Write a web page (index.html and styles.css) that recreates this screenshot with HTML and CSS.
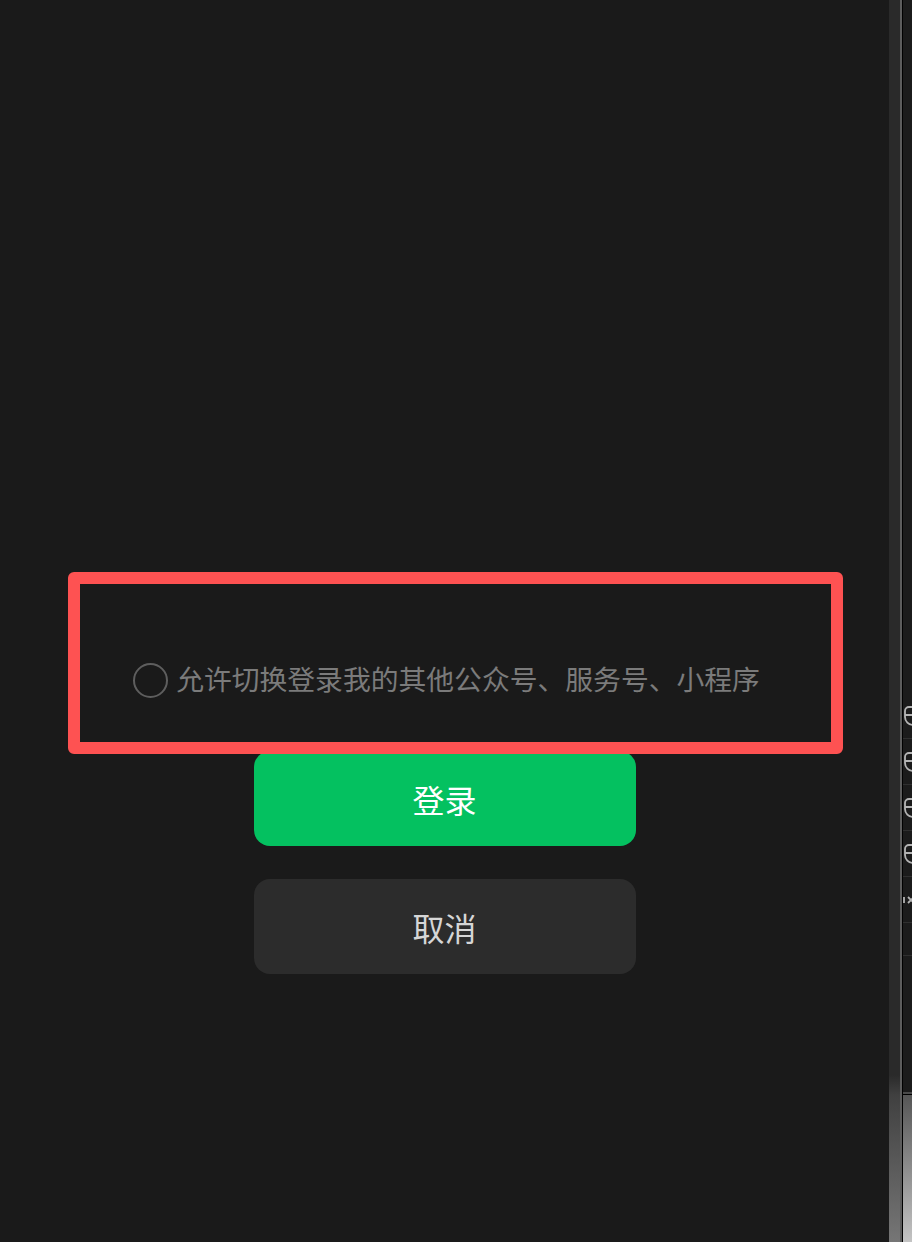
FILE: index.html
```html
<!DOCTYPE html>
<html lang="zh-CN">
<head>
<meta charset="utf-8">
<title>登录</title>
<link rel="stylesheet" href="styles.css">
</head>
<body>
<div class="window">
  <main class="main">
    <label class="allow-row">
      <span class="radio"></span>
      <span class="allow-text">允许切换登录我的其他公众号、服务号、小程序</span>
    </label>
    <button class="btn btn-login">登录</button>
    <button class="btn btn-cancel">取消</button>
    <div class="highlight"></div>
  </main>
  <div class="scroll-strip"></div>
  <div class="edge-line"></div>
  <aside class="side">
    <div class="side-list">
      <div class="side-item">
        <svg class="side-icon" viewBox="0 0 22 22"><path d="M21 2H6a4 4 0 0 0-4 4v6a8 8 0 0 0 8 8h11M2 10h19" fill="none" stroke="currentColor" stroke-width="1.8"/></svg>
      </div>
      <div class="side-item">
        <svg class="side-icon" viewBox="0 0 22 22"><path d="M21 2H6a4 4 0 0 0-4 4v6a8 8 0 0 0 8 8h11M2 10h19" fill="none" stroke="currentColor" stroke-width="1.8"/></svg>
      </div>
      <div class="side-item">
        <svg class="side-icon" viewBox="0 0 22 22"><path d="M21 2H6a4 4 0 0 0-4 4v6a8 8 0 0 0 8 8h11M2 10h19" fill="none" stroke="currentColor" stroke-width="1.8"/></svg>
      </div>
      <div class="side-item">
        <svg class="side-icon" viewBox="0 0 22 22"><path d="M21 2H6a4 4 0 0 0-4 4v6a8 8 0 0 0 8 8h11M2 10h19" fill="none" stroke="currentColor" stroke-width="1.8"/></svg>
      </div>
      <div class="side-item">
        <svg class="side-icon side-x" viewBox="0 0 22 22"><path d="M1 8v6M5 8l6 6M11 8l-6 6" fill="none" stroke="currentColor" stroke-width="1.8"/></svg>
      </div>
      <div class="side-item side-blank"></div>
    </div>
    <div class="side-bottom"></div>
  </aside>
</div>
</body>
</html>
```
FILE: styles.css
```css
html, body {
  margin: 0;
  padding: 0;
  height: 100%;
  background: #1a1a1a;
  font-family: "Noto Sans CJK SC", "Noto Sans", sans-serif;
}

.window {
  display: flex;
  height: 1242px;
  overflow: hidden;
}

.main {
  position: relative;
  width: 889px;
  flex: none;
  background: #1a1a1a;
  display: flex;
  flex-direction: column;
  align-items: center;
  padding-top: 663px;
  box-sizing: border-box;
}

.allow-row {
  display: flex;
  align-items: center;
  gap: 8px;
  height: 34px;
  margin-left: 4px;
}

.radio {
  width: 31px;
  height: 31px;
  border: 2px solid #5e5e5e;
  border-radius: 50%;
  flex: none;
}

.allow-text {
  color: #7b7b7b;
  font-size: 27.8px;
  line-height: 34px;
  padding-bottom: 5px;
  white-space: nowrap;
}

.btn {
  width: 382px;
  height: 95px;
  border: none;
  border-radius: 16px;
  font-family: "Noto Sans CJK SC", "Noto Sans", sans-serif;
  font-size: 32px;
  padding: 0;
  flex: none;
}

.btn-login {
  margin-top: 54px;
  background: #04c160;
  color: #ffffff;
}

.btn-cancel {
  margin-top: 33px;
  background: #2c2c2c;
  color: #d6d6d6;
}

.highlight {
  position: absolute;
  left: 68px;
  top: 572px;
  width: 775px;
  height: 182px;
  box-sizing: border-box;
  border: 12px solid #fe5252;
  border-radius: 6px;
  pointer-events: none;
}

.scroll-strip {
  width: 11px;
  flex: none;
  background: linear-gradient(to bottom, #2a2a2a 0, #2a2a2a 1075px, #404040 1095px, #767676 1242px);
}

.edge-line {
  width: 2px;
  flex: none;
  background: #5c5c5c;
  border-right: 1px solid #000;
}

.side {
  flex: 1;
  display: flex;
  flex-direction: column;
  background: #1b1b1b;
  overflow: hidden;
}

.side-list {
  height: 1092px;
  padding-top: 693px;
  box-sizing: border-box;
}

.side-item {
  height: 46px;
  border-bottom: 1px solid #2f2f2f;
  display: flex;
  align-items: center;
  box-sizing: border-box;
  color: #b4b4b4;
}

.side-blank {
  height: 33px;
}

.side-icon {
  width: 22px;
  height: 22px;
  flex: none;
}

.side-bottom {
  flex: 1;
  border-top: 2px solid #4a4a4a;
  box-shadow: inset 0 1px 0 #000;
  background: linear-gradient(to bottom, #555555, #c4c4c4);
}
```
